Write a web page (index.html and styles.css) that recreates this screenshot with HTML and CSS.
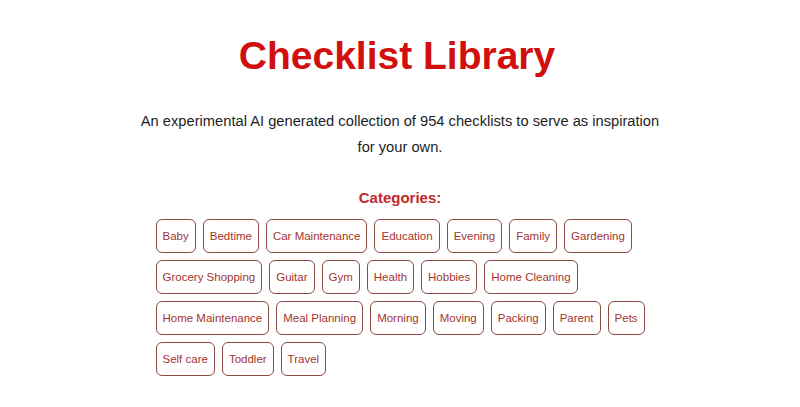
FILE: index.html
```html
<!DOCTYPE html>
<html>
<head>
<meta charset="utf-8">
<link rel="stylesheet" href="styles.css">
</head>
<body>
<main class="page">
  <h1 class="title">Checklist Library</h1>
  <p class="intro">An experimental AI generated collection of 954 checklists to serve as inspiration for your own.</p>
  <h2 class="cat-heading">Categories:</h2>
  <ul class="tags">
    <li class="tag">Baby</li>
    <li class="tag">Bedtime</li>
    <li class="tag">Car Maintenance</li>
    <li class="tag">Education</li>
    <li class="tag">Evening</li>
    <li class="tag">Family</li>
    <li class="tag">Gardening</li>
    <li class="tag">Grocery Shopping</li>
    <li class="tag">Guitar</li>
    <li class="tag">Gym</li>
    <li class="tag">Health</li>
    <li class="tag">Hobbies</li>
    <li class="tag">Home Cleaning</li>
    <li class="tag">Home Maintenance</li>
    <li class="tag">Meal Planning</li>
    <li class="tag">Morning</li>
    <li class="tag">Moving</li>
    <li class="tag">Packing</li>
    <li class="tag">Parent</li>
    <li class="tag">Pets</li>
    <li class="tag">Self care</li>
    <li class="tag">Toddler</li>
    <li class="tag">Travel</li>
  </ul>
</main>
</body>
</html>
```
FILE: styles.css
```css
html, body {
  margin: 0;
  padding: 0;
  background: #ffffff;
}
body {
  font-family: "Liberation Sans", Arial, Helvetica, sans-serif;
  color: #222222;
}
.page {
  display: flex;
  flex-direction: column;
  align-items: center;
  padding-top: 33px;
}
.title {
  margin: 0;
  padding-right: 6px;
  font-size: 39px;
  line-height: 46px;
  font-weight: bold;
  color: #d10f0f;
}
.intro {
  margin: 29px 0 0;
  max-width: 530px;
  text-align: center;
  font-size: 14.7px;
  line-height: 26px;
  color: #1e1e1e;
}
.cat-heading {
  margin: 28px 0 0;
  font-size: 15px;
  line-height: 20px;
  font-weight: bold;
  color: #c0282a;
}
.tags {
  list-style: none;
  margin: 11px 0 0;
  padding: 0 0 0 1px;
  width: 490px;
  display: flex;
  flex-wrap: wrap;
  gap: 7px 7px;
}
.tag {
  font-size: 11.5px;
  line-height: 13px;
  padding: 10px 6px 9px;
  border: 1px solid #8a4a44;
  border-radius: 6px;
  color: #a3352e;
}
```
